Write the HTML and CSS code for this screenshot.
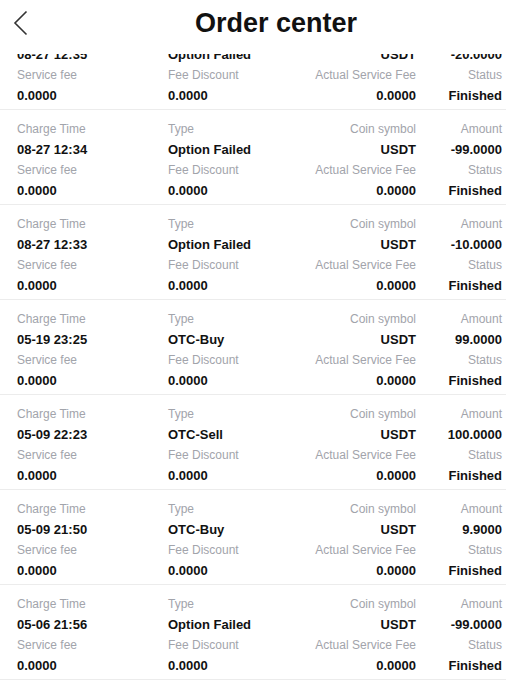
FILE: index.html
```html
<!DOCTYPE html>
<html>
<head>
<meta charset="utf-8">
<link rel="stylesheet" href="styles.css">
</head>
<body>
<div class="page">
  <header class="header">
    <span class="back">
      <svg width="16" height="26" viewBox="0 0 16 26"><polyline points="13.5,1.5 2,13 13.5,24.5" fill="none" stroke="#333" stroke-width="1.6" stroke-linejoin="miter"/></svg>
    </span>
    <h1 class="title">Order center</h1>
  </header>
  <div class="list">
    <div class="inner">
      <div class="record">
        <div class="lbl">Charge Time</div><div class="lbl">Type</div><div class="lbl r">Coin symbol</div><div class="lbl r">Amount</div>
        <div class="val">08-27 12:35</div><div class="val">Option Failed</div><div class="val r">USDT</div><div class="val r">-20.0000</div>
        <div class="lbl">Service fee</div><div class="lbl">Fee Discount</div><div class="lbl r">Actual Service Fee</div><div class="lbl r">Status</div>
        <div class="val">0.0000</div><div class="val">0.0000</div><div class="val r">0.0000</div><div class="val r">Finished</div>
      </div>
      <div class="record">
        <div class="lbl">Charge Time</div><div class="lbl">Type</div><div class="lbl r">Coin symbol</div><div class="lbl r">Amount</div>
        <div class="val">08-27 12:34</div><div class="val">Option Failed</div><div class="val r">USDT</div><div class="val r">-99.0000</div>
        <div class="lbl">Service fee</div><div class="lbl">Fee Discount</div><div class="lbl r">Actual Service Fee</div><div class="lbl r">Status</div>
        <div class="val">0.0000</div><div class="val">0.0000</div><div class="val r">0.0000</div><div class="val r">Finished</div>
      </div>
      <div class="record">
        <div class="lbl">Charge Time</div><div class="lbl">Type</div><div class="lbl r">Coin symbol</div><div class="lbl r">Amount</div>
        <div class="val">08-27 12:33</div><div class="val">Option Failed</div><div class="val r">USDT</div><div class="val r">-10.0000</div>
        <div class="lbl">Service fee</div><div class="lbl">Fee Discount</div><div class="lbl r">Actual Service Fee</div><div class="lbl r">Status</div>
        <div class="val">0.0000</div><div class="val">0.0000</div><div class="val r">0.0000</div><div class="val r">Finished</div>
      </div>
      <div class="record">
        <div class="lbl">Charge Time</div><div class="lbl">Type</div><div class="lbl r">Coin symbol</div><div class="lbl r">Amount</div>
        <div class="val">05-19 23:25</div><div class="val">OTC-Buy</div><div class="val r">USDT</div><div class="val r">99.0000</div>
        <div class="lbl">Service fee</div><div class="lbl">Fee Discount</div><div class="lbl r">Actual Service Fee</div><div class="lbl r">Status</div>
        <div class="val">0.0000</div><div class="val">0.0000</div><div class="val r">0.0000</div><div class="val r">Finished</div>
      </div>
      <div class="record">
        <div class="lbl">Charge Time</div><div class="lbl">Type</div><div class="lbl r">Coin symbol</div><div class="lbl r">Amount</div>
        <div class="val">05-09 22:23</div><div class="val">OTC-Sell</div><div class="val r">USDT</div><div class="val r">100.0000</div>
        <div class="lbl">Service fee</div><div class="lbl">Fee Discount</div><div class="lbl r">Actual Service Fee</div><div class="lbl r">Status</div>
        <div class="val">0.0000</div><div class="val">0.0000</div><div class="val r">0.0000</div><div class="val r">Finished</div>
      </div>
      <div class="record">
        <div class="lbl">Charge Time</div><div class="lbl">Type</div><div class="lbl r">Coin symbol</div><div class="lbl r">Amount</div>
        <div class="val">05-09 21:50</div><div class="val">OTC-Buy</div><div class="val r">USDT</div><div class="val r">9.9000</div>
        <div class="lbl">Service fee</div><div class="lbl">Fee Discount</div><div class="lbl r">Actual Service Fee</div><div class="lbl r">Status</div>
        <div class="val">0.0000</div><div class="val">0.0000</div><div class="val r">0.0000</div><div class="val r">Finished</div>
      </div>
      <div class="record">
        <div class="lbl">Charge Time</div><div class="lbl">Type</div><div class="lbl r">Coin symbol</div><div class="lbl r">Amount</div>
        <div class="val">05-06 21:56</div><div class="val">Option Failed</div><div class="val r">USDT</div><div class="val r">-99.0000</div>
        <div class="lbl">Service fee</div><div class="lbl">Fee Discount</div><div class="lbl r">Actual Service Fee</div><div class="lbl r">Status</div>
        <div class="val">0.0000</div><div class="val">0.0000</div><div class="val r">0.0000</div><div class="val r">Finished</div>
      </div>
    </div>
  </div>
</div>
</body>
</html>
```
FILE: styles.css
```css
html, body {
  margin: 0;
  padding: 0;
  background: #fff;
}
body {
  font-family: "Liberation Sans", Arial, sans-serif;
  color: #111;
}
.page {
  width: 506px;
  height: 680px;
  display: flex;
  flex-direction: column;
  overflow: hidden;
}
.header {
  flex: none;
  height: 54px;
  display: flex;
  align-items: flex-start;
  background: #fff;
}
.back {
  flex: none;
  width: 46px;
  height: 46px;
  display: flex;
  align-items: center;
  padding-left: 13px;
  box-sizing: border-box;
}
.title {
  flex: 1;
  margin: 0;
  font-size: 27px;
  font-weight: bold;
  color: #111;
  line-height: 46px;
  text-align: center;
}
.list {
  flex: 1;
  overflow: hidden;
}
.inner {
  margin-top: -39px;
}
.record {
  display: grid;
  grid-template-columns: 151px 124px 124px 86px;
  padding: 9px 4px 3px 17px;
  border-bottom: 1px solid #ececec;
}
.lbl {
  font-size: 12px;
  line-height: 20px;
  color: #a2a4ab;
  white-space: nowrap;
}
.val {
  font-size: 13px;
  line-height: 21px;
  font-weight: bold;
  color: #111;
  white-space: nowrap;
}
.r {
  text-align: right;
}
```
